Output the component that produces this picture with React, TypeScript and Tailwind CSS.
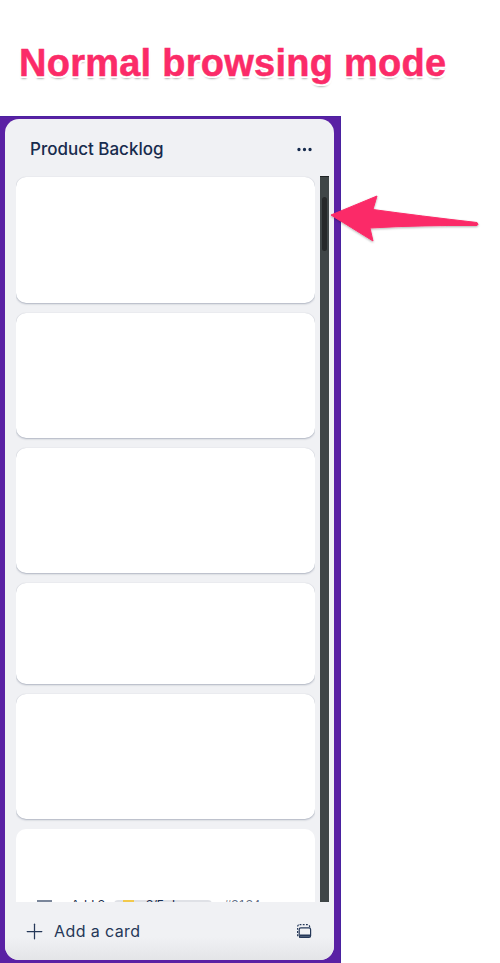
import { Plus, MoreHorizontal } from "lucide-react";

const cardHeights = ["h-[126px]", "h-[125px]", "h-[125px]", "h-[101px]", "h-[125px]"];

function TemplateIcon() {
  return (
    <svg className="-mt-[1px]" width="16" height="16" viewBox="0 0 16 16" fill="none" stroke="#253858" strokeWidth="1.2">
      <rect x="1.600" y="1.600" width="12" height="12.500" rx="2" strokeDasharray="1.800 1.400" />
      <rect x="3.200" y="4.800" width="11.400" height="9.600" rx="1.600" fill="#f0f1f4" />
      <path d="M3.600 12.600h10.600" strokeWidth="2.200" />
    </svg>
  );
}

function LastCard() {
  return (
    <div className="h-[90px] overflow-hidden rounded-t-[10px] bg-white">
      <div className="flex items-start whitespace-nowrap pl-[21px] pt-[71px] text-[13px] leading-[16px] text-[#172b4d]">
        <div className="h-[14px] w-[15px] shrink-0 border-t-2 border-[#7a869a]" />
        <span className="ml-[19px] -mt-[3px] w-[31px] shrink-0">Add 3</span>
        <div className="ml-[12px] flex h-[16px] w-[98px] shrink-0 items-start rounded-sm bg-[#dfe1e6]">
          <div className="ml-[9px] h-[16px] w-[11px] bg-[#f2c94c]" />
          <span className="ml-[12px] -mt-[3px]">3/5 done</span>
        </div>
        <span className="ml-[12px] -mt-[3px] text-[#5e6c84]">#2134</span>
      </div>
    </div>
  );
}

export default function App() {
  return (
    <div className="relative h-[963px] w-[500px] overflow-hidden bg-white font-['Liberation_Sans',sans-serif]">
      <h1 className="h-[116px] pl-[19px] pt-[41px] text-[38px] font-bold leading-[44px] tracking-[0.25px] text-[#fb2b68] [-webkit-text-stroke:0.5px_#fb2b68] [text-shadow:2px_0_0_#fff,-2px_0_0_#fff,0_-2px_0_#fff,0_2px_0_#fff,2px_2px_0_#fff,-2px_2px_0_#fff,0_3px_2px_rgba(0,0,0,0.3)]">
        Normal browsing mode
      </h1>

      <div className="h-[847px] w-[341px] border-t border-r border-[#4a22a0] bg-[#5a21a4] pl-[5px] pt-[2px]">
        <div className="flex h-[841px] w-[329px] flex-col overflow-hidden rounded-[14px] bg-[#f0f1f4]">
          <div className="flex h-[57px] shrink-0 items-center justify-between pl-[25px] pr-[20px] pt-[4px]">
            <span className="font-['Inter',sans-serif] text-[17px] font-medium text-[#172b4d]">Product Backlog</span>
            <MoreHorizontal size={19} strokeWidth={2.2} className="text-[#172b4d]" />
          </div>

          <div className="flex min-h-0 flex-1 pl-[11px]">
            <div className="flex w-[299px] flex-col gap-[10px] overflow-hidden pt-[1px]">
              {cardHeights.map((height, index) => (
                <div
                  key={index}
                  className={`${height} shrink-0 rounded-[10px] bg-white shadow-[0_1px_2px_rgba(9,30,66,0.28),0_0_1px_rgba(9,30,66,0.15)]`}
                />
              ))}
              <LastCard />
            </div>
            <div className="ml-[5px] h-full w-[9px] border-t border-[#1f2324] bg-[#3f4647] px-[2px] pt-[20px]">
              <div className="h-[54px] rounded-full bg-[#26292a]" />
            </div>
          </div>

          <div className="flex h-[58px] shrink-0 items-center justify-between bg-gradient-to-b from-[#f0f1f4] from-60% to-[#e4e5e8] pl-[17px] pr-[22px] text-[#253858]">
            <div className="flex items-center gap-[7px]">
              <Plus size={25} strokeWidth={1.2} />
              <span className="font-['Inter',sans-serif] text-[16px] font-normal tracking-[0.4px]">Add a card</span>
            </div>
            <TemplateIcon />
          </div>
        </div>
      </div>

      <svg className="absolute left-[325px] top-[190px]" width="160" height="56" viewBox="325 190 160 56">
        <defs>
          <filter id="arrowShadow" x="-10%" y="-20%" width="120%" height="140%">
            <feDropShadow dx="0" dy="1" stdDeviation="0.8" floodColor="#000" floodOpacity="0.3" />
          </filter>
        </defs>
        <path
          d="M331 215L377 196L373 209.500Q420 216 477 222.500Q479 224.500 477 225.500Q420 225 370 228L373 241Z"
          fill="#fb2b68"
          stroke="#fb2b68"
          strokeWidth="1"
          strokeLinejoin="round"
          filter="url(#arrowShadow)"
        />
      </svg>
    </div>
  );
}
